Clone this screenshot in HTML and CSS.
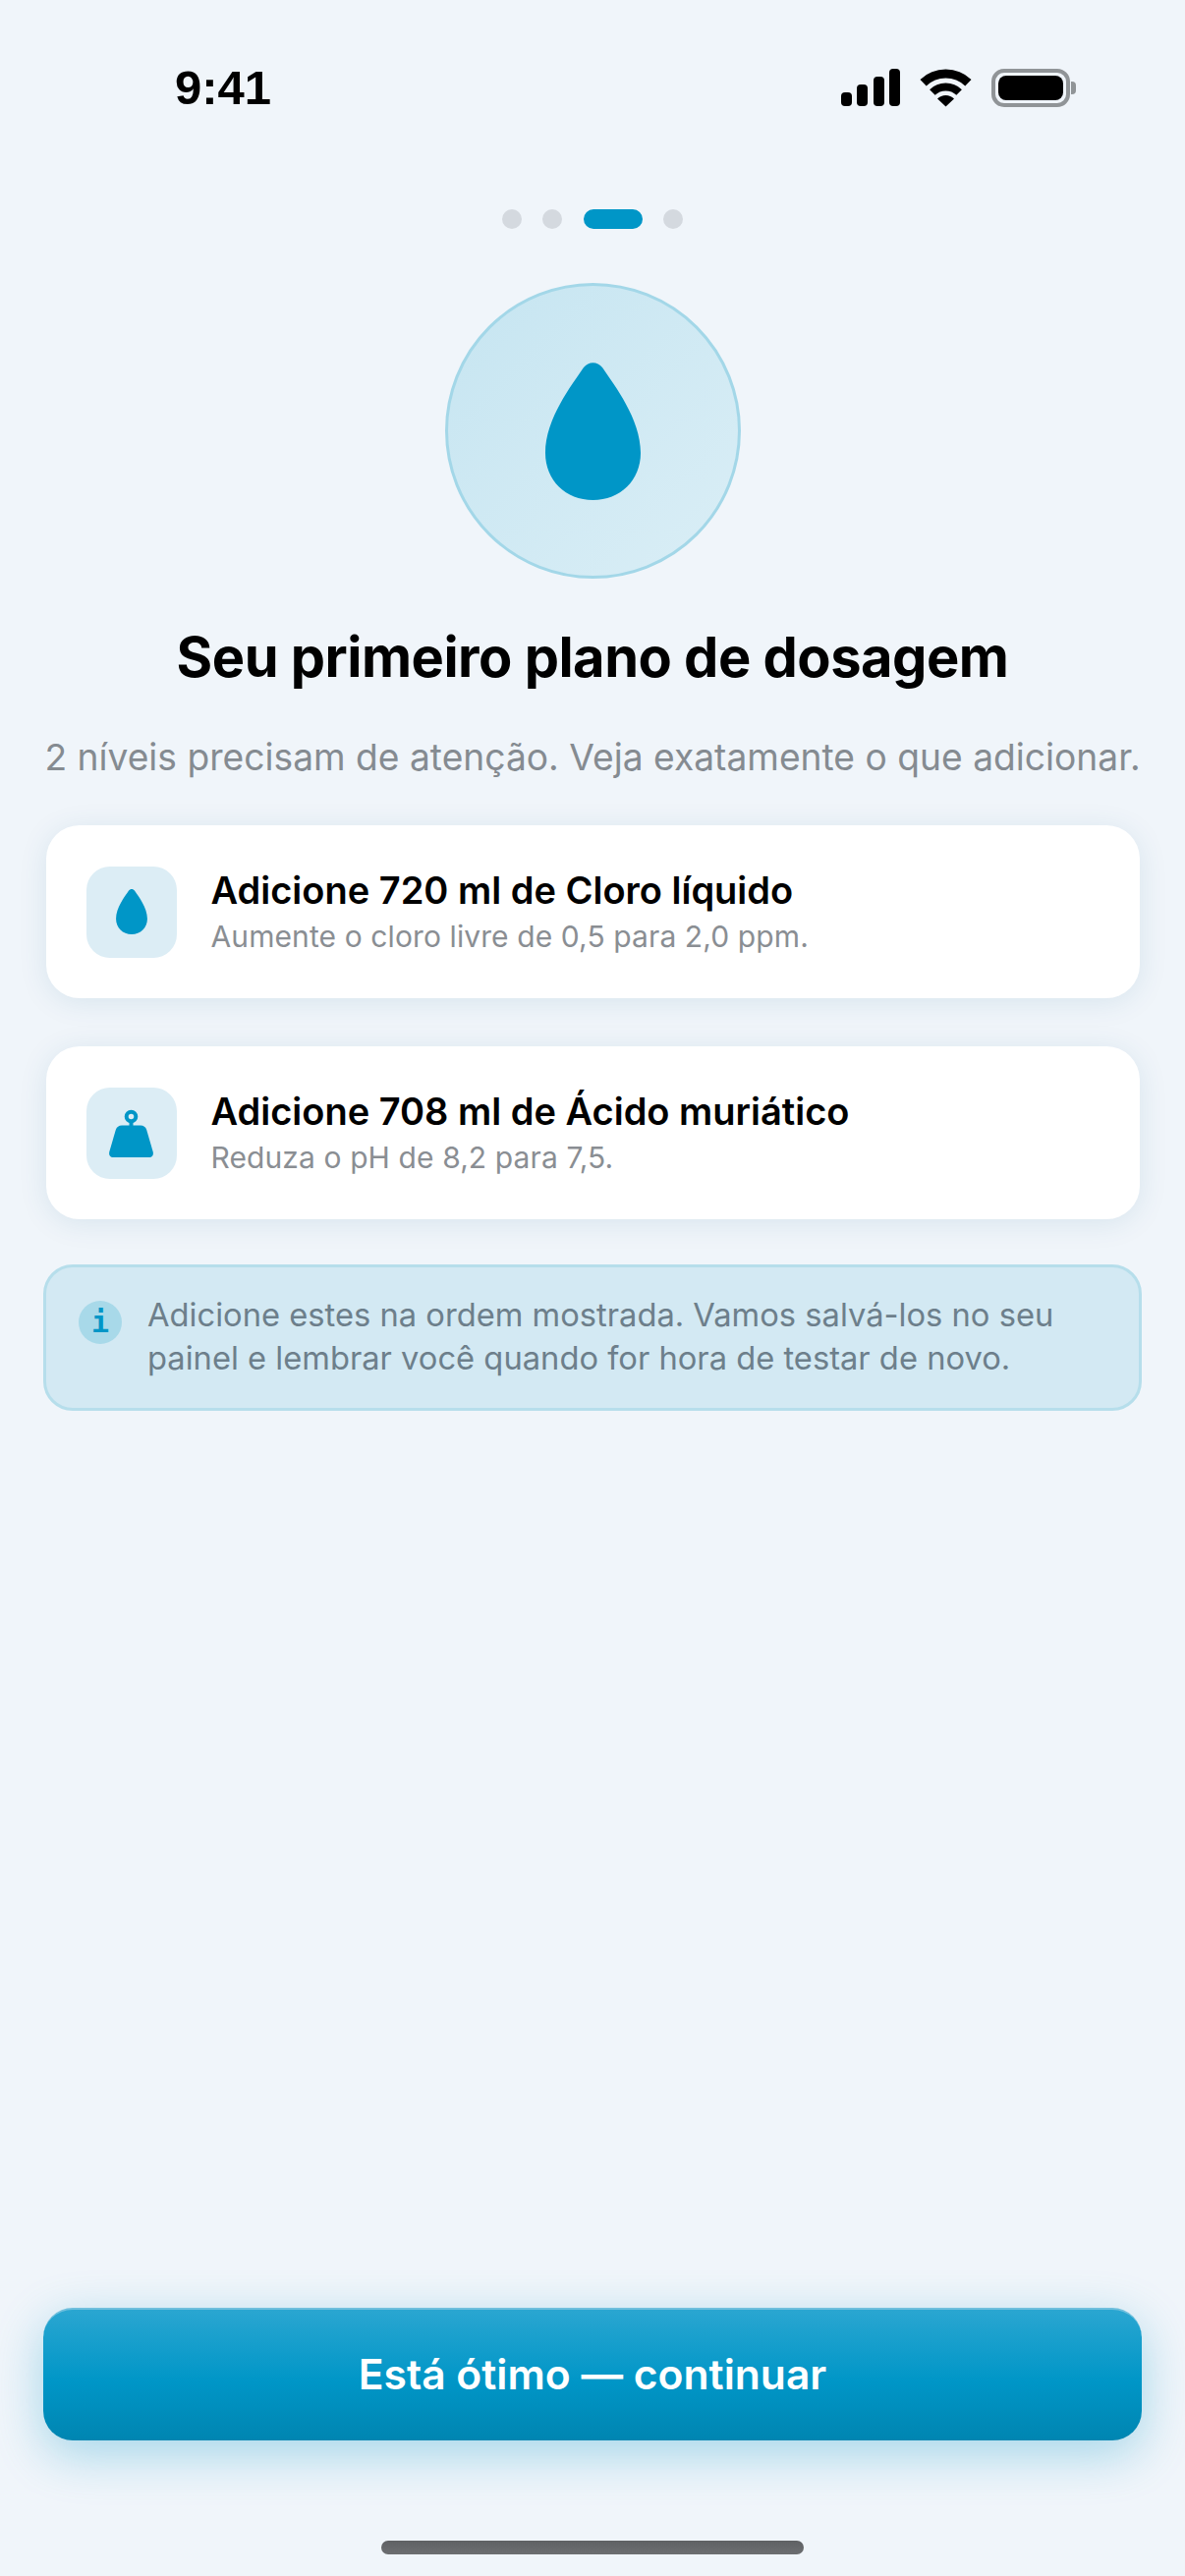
FILE: index.html
```html
<!DOCTYPE html>
<html lang="pt-BR">
<head>
<meta charset="utf-8">
<title>Plano de dosagem</title>
<link rel="stylesheet" href="styles.css">
</head>
<body>
<main class="screen">
  <header class="status">
    <span class="time">9:41</span>
    <div class="status-icons">
      <svg class="signal" viewBox="0 0 60 38"><rect x="0" y="24" width="11" height="14" rx="4"/><rect x="16" y="16" width="11" height="22" rx="4"/><rect x="33" y="8" width="11" height="30" rx="4"/><rect x="49" y="0" width="11" height="38" rx="4"/></svg>
      <svg class="wifi" viewBox="0 0 53 39"><path class="arc" stroke-width="9" d="M3.6 14.3A33 33 0 0 1 49.4 14.3"/><path class="arc" stroke-width="8" d="M12.9 24A19.5 19.5 0 0 1 40.1 24"/><path d="M26.5 38.5L18 30.5A12 12 0 0 1 35 30.5Z"/></svg>
      <div class="battery"><div class="battery-fill"></div></div>
    </div>
  </header>

  <div class="pager">
    <span class="dot"></span><span class="dot"></span><span class="dot dot-active"></span><span class="dot"></span>
  </div>

  <div class="hero">
    <svg class="hero-drop" viewBox="0 0 97 140"><path d="M39 5C44-1.5 53-1.5 58 5C70 23 97 57 97 92C97 120 76 140 48.5 140C21 140 0 120 0 92C0 57 27 23 39 5Z"/></svg>
  </div>

  <h1 class="title">Seu primeiro plano de dosagem</h1>
  <p class="subtitle">2 níveis precisam de atenção. Veja exatamente o que adicionar.</p>

  <section class="cards">
    <article class="card">
      <div class="card-icon">
        <svg class="small-drop" viewBox="0 0 97 140"><path d="M39 5C44-1.5 53-1.5 58 5C70 23 97 57 97 92C97 120 76 140 48.5 140C21 140 0 120 0 92C0 57 27 23 39 5Z"/></svg>
      </div>
      <div class="card-text">
        <h2 class="card-title">Adicione 720 ml de Cloro líquido</h2>
        <p class="card-sub">Aumente o cloro livre de 0,5 para 2,0 ppm.</p>
      </div>
    </article>
    <article class="card">
      <div class="card-icon">
        <svg class="weight" viewBox="0 0 45 48"><circle class="ring" cx="22.5" cy="6.5" r="4.8"/><path class="ring" d="M22.5 11V17"/><path d="M13 15.5H32C35 15.5 37.3 17 38.2 20L44.6 42C45.6 45.5 44 48 41 48H4C1 48 -.6 45.5 .4 42L6.8 20C7.7 17 10 15.5 13 15.5Z"/></svg>
      </div>
      <div class="card-text">
        <h2 class="card-title">Adicione 708 ml de Ácido muriático</h2>
        <p class="card-sub">Reduza o pH de 8,2 para 7,5.</p>
      </div>
    </article>
  </section>

  <aside class="info">
    <span class="info-icon">i</span>
    <p class="info-text">Adicione estes na ordem mostrada. Vamos salvá-los no seu painel e lembrar você quando for hora de testar de novo.</p>
  </aside>

  <button class="cta">Está ótimo — continuar</button>
  <div class="home-bar"></div>
</main>
</body>
</html>
```

FILE: styles.css
```css
* { box-sizing: border-box; margin: 0; padding: 0; }
html, body { width: 1206px; height: 2622px; overflow: hidden; }
body { background: #f0f5fa; font-family: Inter, "Noto Sans", sans-serif; color: #000; }

.screen { width: 1206px; height: 2622px; display: flex; flex-direction: column; align-items: center; }

.status { width: 100%; height: 68px; margin-top: 55px; padding: 0 117px 0 178px; display: flex; justify-content: space-between; align-items: center; }
.time { font-family: "Liberation Sans", Arial, sans-serif; font-weight: 700; font-size: 49px; line-height: 68px; }
.status-icons { display: flex; align-items: center; gap: 20px; }
.signal { width: 60px; height: 38px; display: block; }
.wifi { width: 53px; height: 39px; display: block; }
.arc { fill: none; stroke: #000; }
.battery { width: 80px; height: 39px; border: 4px solid #909497; border-radius: 13px; padding: 3px; position: relative; }
.battery::after { content: ""; position: absolute; left: 77px; top: 9px; width: 5px; height: 13px; background: #909497; border-radius: 0 4px 4px 0; }
.battery-fill { width: 100%; height: 100%; background: #000; border-radius: 8px; }

.pager { margin-top: 90px; display: flex; gap: 21.5px; height: 20px; }
.dot { width: 20px; height: 20px; border-radius: 50%; background: #d4d9df; }
.dot-active { width: 60px; border-radius: 10px; background: #0096c7; }

.hero { margin-top: 55px; width: 301px; height: 301px; border-radius: 50%; border: 3px solid #a3d7e8; background: linear-gradient(135deg, #c6e5f1, #daeef6); display: flex; align-items: center; justify-content: center; }
.hero-drop { width: 97px; height: 140px; fill: #0096c7; margin-top: 1px; }

.title { margin-top: 45px; font-size: 56px; line-height: 70px; font-weight: 700; letter-spacing: -0.5px; text-align: center; }
.subtitle { margin-top: 42px; font-size: 37.2px; line-height: 50px; color: #858b91; text-align: center; white-space: nowrap; }

.cards { margin-top: 44px; width: 1113px; display: flex; flex-direction: column; gap: 49px; }
.card { height: 176px; background: #fff; border-radius: 34px; padding: 0 41px; display: flex; align-items: center; gap: 35px; box-shadow: 0 4px 30px rgba(0, 90, 130, 0.1); }
.card-icon { width: 92px; height: 93px; border-radius: 24px; background: #dcedf5; display: flex; align-items: center; justify-content: center; flex: none; }
.small-drop { width: 32px; height: 46px; fill: #0096c7; }
.weight { width: 45px; height: 48px; fill: #0096c7; overflow: visible; margin-top: 1px; }
.ring { fill: none; stroke: #0096c7; stroke-width: 4; }
.card-title { font-size: 38px; line-height: 46px; font-weight: 570; }
.card-sub { margin-top: 4px; font-size: 30px; line-height: 40px; letter-spacing: 0.1px; color: #8a8e93; }

.info { margin-top: 46px; width: 1118px; height: 149px; border: 3px solid #b6deeb; border-radius: 30px; background: #d3e9f3; padding: 26px 36px 0 33px; display: flex; gap: 26px; align-items: flex-start; }
.info-icon { flex: none; width: 44px; height: 44px; margin-top: 8px; border-radius: 50%; background: #a8d9e9; color: #0096c7; font-family: "DejaVu Sans Mono", monospace; font-weight: 700; font-size: 30px; line-height: 44px; text-align: center; }
.info-text { font-size: 32.7px; line-height: 44px; color: #6d7f8b; }

.cta { margin-top: auto; width: 1118px; height: 135px; border: none; border-top: 2px solid #6fbfdd; border-radius: 30px; background: linear-gradient(180deg, #2aa6d1 0%, #0096c7 55%, #0085b1 100%); color: #fff; font-family: Inter, sans-serif; font-size: 42.6px; font-weight: 560; padding-bottom: 3px; box-shadow: 0 14px 50px rgba(0, 150, 199, 0.32); }
.home-bar { margin-top: 102px; margin-bottom: 22px; width: 430px; height: 14px; border-radius: 7px; background: linear-gradient(180deg, #5f6164, #6c6e71); }
```
